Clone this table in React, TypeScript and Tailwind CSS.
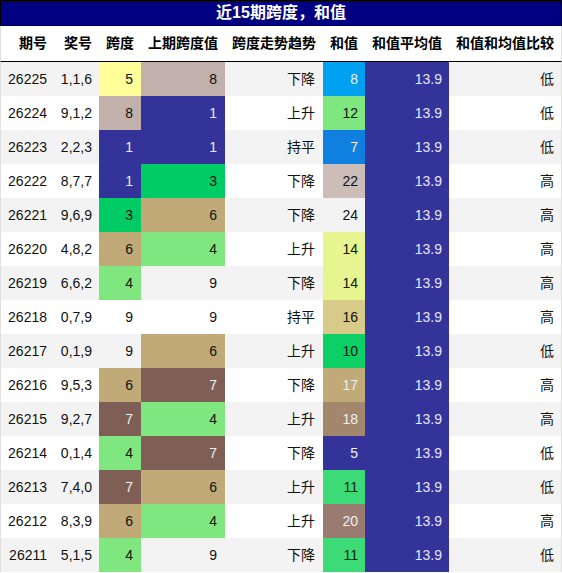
import React from "react";

type Row = [string, string, number, number, string, number, string];

const rows: Row[] = [
  ["26225", "1,1,6", 5, 8, "下降", 8, "低"],
  ["26224", "9,1,2", 8, 1, "上升", 12, "低"],
  ["26223", "2,2,3", 1, 1, "持平", 7, "低"],
  ["26222", "8,7,7", 1, 3, "下降", 22, "高"],
  ["26221", "9,6,9", 3, 6, "下降", 24, "高"],
  ["26220", "4,8,2", 6, 4, "上升", 14, "高"],
  ["26219", "6,6,2", 4, 9, "下降", 14, "高"],
  ["26218", "0,7,9", 9, 9, "持平", 16, "高"],
  ["26217", "0,1,9", 9, 6, "上升", 10, "低"],
  ["26216", "9,5,3", 6, 7, "下降", 17, "高"],
  ["26215", "9,2,7", 7, 4, "上升", 18, "高"],
  ["26214", "0,1,4", 4, 7, "下降", 5, "低"],
  ["26213", "7,4,0", 7, 6, "上升", 11, "低"],
  ["26212", "8,3,9", 6, 4, "上升", 20, "高"],
  ["26211", "5,1,5", 4, 9, "下降", 11, "低"],
];

const spanColor: Record<number, string> = {
  1: "bg-[#333399] text-[#f0f0f0]",
  3: "bg-[#00cc66] text-[#111111]",
  4: "bg-[#80e680] text-[#111111]",
  5: "bg-[#ffff99] text-[#111111]",
  6: "bg-[#bfaa78] text-[#111111]",
  7: "bg-[#7f5f55] text-[#f0f0f0]",
  8: "bg-[#c2b0aa] text-[#111111]",
  9: "text-[#111111]",
};

const sumColor: Record<number, string> = {
  5: "bg-[#333399] text-[#f0f0f0]",
  7: "bg-[#1080e0] text-[#f0f0f0]",
  8: "bg-[#00a0f0] text-[#f0f0f0]",
  10: "bg-[#0ccf66] text-[#111111]",
  11: "bg-[#3dda78] text-[#111111]",
  12: "bg-[#80e680] text-[#111111]",
  14: "bg-[#e6f590] text-[#111111]",
  16: "bg-[#d8ca88] text-[#111111]",
  17: "bg-[#bfaa78] text-[#f0f0f0]",
  18: "bg-[#a3876d] text-[#f0f0f0]",
  20: "bg-[#9a7b72] text-[#f0f0f0]",
  22: "bg-[#ccbdb8] text-[#111111]",
  24: "text-[#111111]",
};

const grid =
  "grid grid-cols-[53px_45px_42px_84px_98px_42px_84px_112px]";

const headers = [
  "期号",
  "奖号",
  "跨度",
  "上期跨度值",
  "跨度走势趋势",
  "和值",
  "和值平均值",
  "和值和均值比较",
];

export default function App() {
  return (
    <div
      className="w-[562px] bg-white"
      style={{
        fontFamily:
          '"Liberation Sans", "Noto Sans CJK SC", Arial, sans-serif',
      }}
    >
      <div className="h-[26px] border border-black bg-[#000080] flex items-center justify-center text-white font-bold text-[16px] leading-none">
        近15期跨度，和值
      </div>
      <div
        className={`${grid} h-[36px] border-x border-[#e0e0e0] border-b border-b-black text-[14px] font-bold text-black`}
      >
        {headers.map((h) => (
          <div key={h} className="flex items-center justify-end pr-[7px]">
            {h}
          </div>
        ))}
      </div>
      {rows.map((r, i) => {
        const bg = i % 2 === 0 ? "bg-[#f3f3f3]" : "bg-white";
        return (
          <div
            key={r[0]}
            className={`${grid} h-[34px] border-x border-[#e0e0e0] ${bg} text-[14px] text-[#111111]`}
          >
            <div className="flex items-center justify-end pr-[7px]">{r[0]}</div>
            <div className="flex items-center justify-end pr-[7px]">{r[1]}</div>
            <div className={`flex items-center justify-end pr-[8px] ${spanColor[r[2]]}`}>
              {r[2]}
            </div>
            <div className={`flex items-center justify-end pr-[8px] ${spanColor[r[3]]}`}>
              {r[3]}
            </div>
            <div className="flex items-center justify-end pr-[8px]">{r[4]}</div>
            <div className={`flex items-center justify-end pr-[7px] ${sumColor[r[5]]}`}>
              {r[5]}
            </div>
            <div className="flex items-center justify-end pr-[7px] bg-[#333399] text-[#e8e8f4]">
              13.9
            </div>
            <div className="flex items-center justify-end pr-[7px]">{r[6]}</div>
          </div>
        );
      })}
    </div>
  );
}
